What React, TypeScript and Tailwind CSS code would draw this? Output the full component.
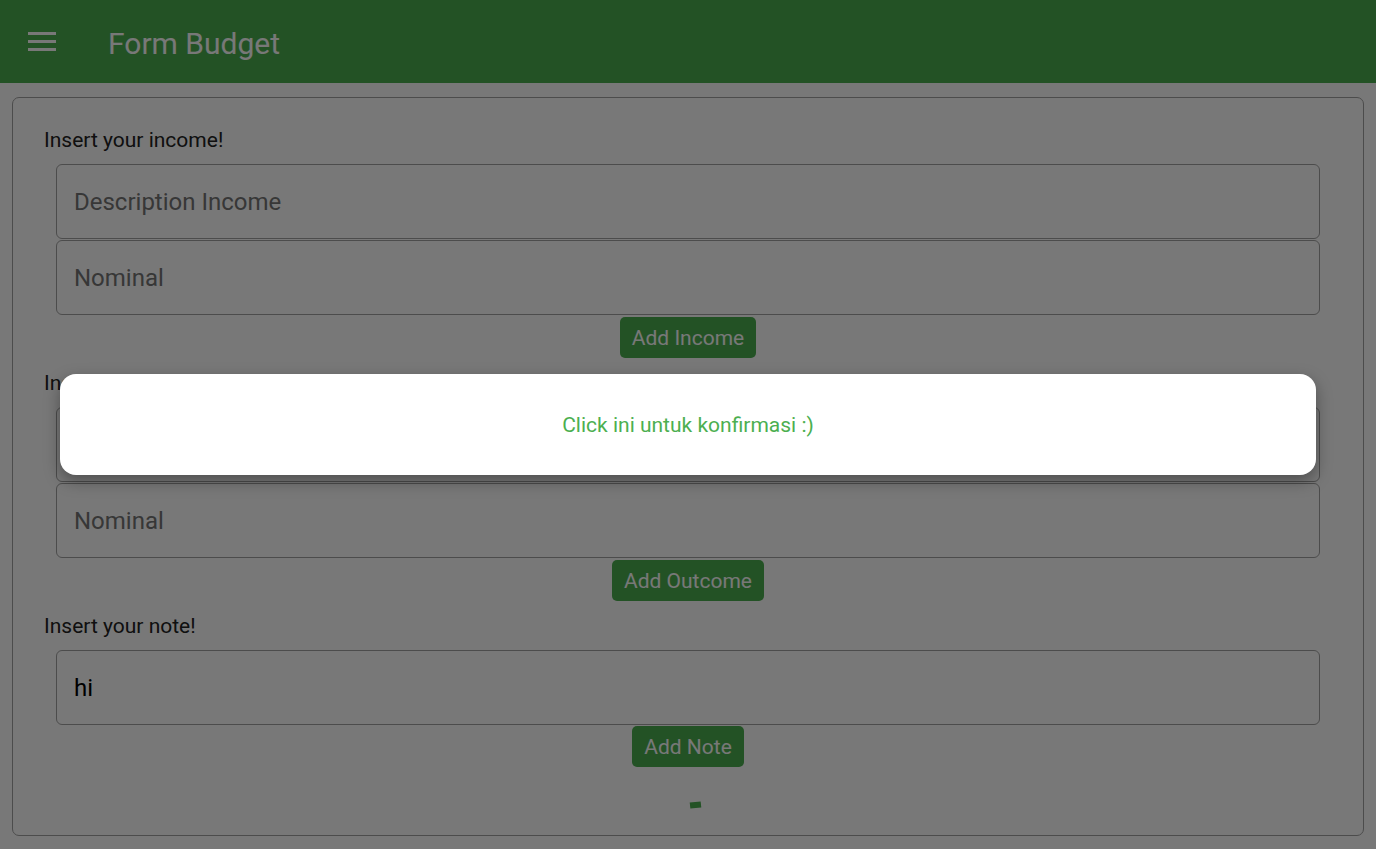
import React from "react";

function Field({ placeholder, value }: { placeholder: string; value?: string }) {
  return (
    <input
      readOnly
      value={value ?? ""}
      placeholder={placeholder}
      className="mx-3 h-[75px] rounded-[6px] border border-[#a2a2a2] bg-white px-[17px] text-[24px] text-black placeholder:text-[#767676] outline-none"
    />
  );
}

function GreenButton({ label }: { label: string }) {
  return (
    <div className="flex justify-center">
      <button className="h-[41px] rounded-[5px] bg-[#4caf50] px-3 pt-[2px] text-[21px] text-white">{label}</button>
    </div>
  );
}

export default function App() {
  return (
    <div className="relative h-[849px] overflow-hidden bg-white font-['Roboto',sans-serif]">
      <div className="flex h-[83px] items-center bg-[#4caf50] text-white">
        <div className="ml-[28px] flex w-[28px] flex-col gap-[5px]">
          <span className="h-[3px] bg-white" />
          <span className="h-[3px] bg-white" />
          <span className="h-[3px] bg-white" />
        </div>
        <h1 className="ml-[52px] mt-[3px] text-[30px]">Form Budget</h1>
      </div>

      <div className="mx-3 mt-[14px] flex h-[739px] flex-col rounded-[7px] border border-[#a2a2a2] px-[31px] pt-[30px]">
        <p className="h-6 text-[21px] leading-6 text-[#222]">Insert your income!</p>
        <div className="mt-3 flex flex-col gap-px">
          <Field placeholder="Description Income" />
          <Field placeholder="Nominal" />
        </div>
        <div className="mt-[2px]">
          <GreenButton label="Add Income" />
        </div>

        <p className="mt-[13px] h-6 text-[21px] leading-6 text-[#222]">Insert your outcome!</p>
        <div className="mt-3 flex flex-col gap-px">
          <Field placeholder="Description Outcome" />
          <Field placeholder="Nominal" />
        </div>
        <div className="mt-[2px]">
          <GreenButton label="Add Outcome" />
        </div>

        <p className="mt-[13px] h-6 text-[21px] leading-6 text-[#222]">Insert your note!</p>
        <div className="mt-3 flex flex-col">
          <Field placeholder="Note" value="hi" />
        </div>
        <div className="mt-px">
          <GreenButton label="Add Note" />
        </div>
        <div className="mt-[35px] flex justify-center">
          <span className="ml-[14px] h-[6px] w-[11px] -rotate-6 bg-[#4caf50]" />
        </div>
      </div>

      <div className="absolute inset-0 bg-black/[0.53]" />
      <div className="absolute left-[60px] right-[60px] top-[374px] flex h-[101px] items-center justify-center rounded-[16px] bg-white pt-[2px] shadow-[0_6px_16px_rgba(0,0,0,0.35)]">
        <span className="text-[21px] text-[#4caf50]">Click ini untuk konfirmasi :)</span>
      </div>
    </div>
  );
}
